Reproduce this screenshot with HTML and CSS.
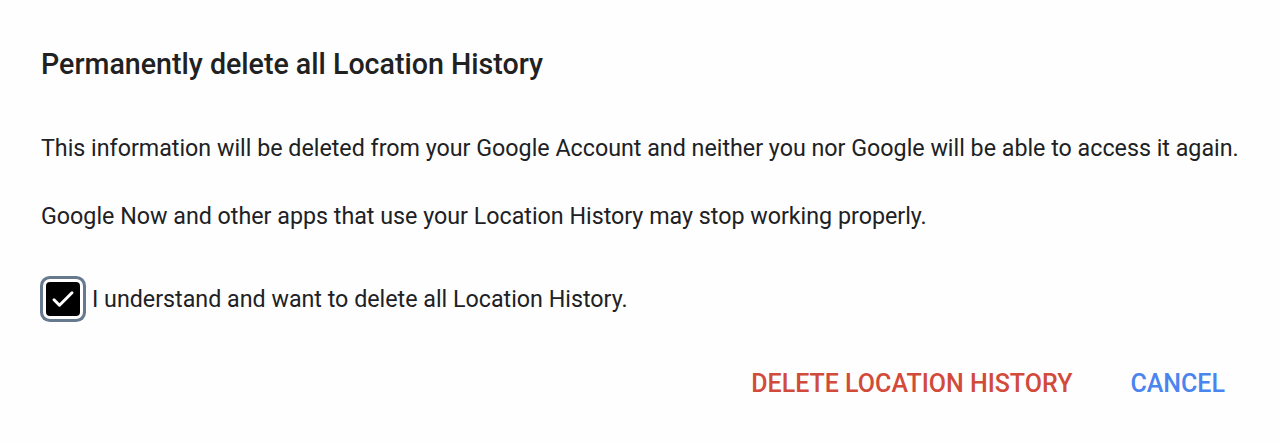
FILE: index.html
```html
<!DOCTYPE html>
<html lang="en">
<head>
    <meta charset="UTF-8">
    <meta name="viewport" content="width=device-width, initial-scale=1.0">
    <title>Permanently delete all Location History</title>
    <link rel="stylesheet" href="styles.css">
</head>
<body>

    <div class="dialog">
        <h1 class="title">Permanently delete all Location History</h1>
        <p class="text">This information will be deleted from your Google Account and neither you nor Google will be able to access it again.</p>
        <p class="text text-second">Google Now and other apps that use your Location History may stop working properly.</p>

        <label class="confirm">
            <span class="box">
                <svg width="30" height="30" viewBox="0 0 24 24">
                    <path d="M4.8 12.6l4.4 4.4L19.2 7" fill="none" stroke="#fff" stroke-width="2.4" stroke-linecap="round" stroke-linejoin="round"/>
                </svg>
            </span>
            I understand and want to delete all Location History.
        </label>

        <div class="actions">
            <button type="button" class="btn btn-delete">Delete Location History</button>
            <button type="button" class="btn btn-cancel">Cancel</button>
        </div>
    </div>

</body>
</html>
```

FILE: styles.css
```css
body {
    margin: 0;
    background: #fefefe;
    font-family: Roboto, "Liberation Sans", sans-serif;
    color: #202124;
}
.dialog {
    padding: 46px 40px 0 41px;
}
.title {
    margin: 0;
    font-size: 28.6px;
    font-weight: 500;
    line-height: 36px;
    color: #212121;
}
.text {
    margin: 50px 0 0;
    font-size: 23.25px;
    line-height: 32px;
}
.text-second {
    margin-top: 36px;
}
.confirm {
    display: flex;
    align-items: center;
    gap: 12px;
    margin-top: 50px;
    font-size: 23.25px;
    line-height: 32px;
}
.box {
    display: flex;
    align-items: center;
    justify-content: center;
    width: 34px;
    height: 34px;
    margin-left: 5px;
    background: #000;
    border-radius: 4px;
    box-shadow: 0 0 0 3px #fff, 0 0 0 6px #66798f;
}
.actions {
    display: flex;
    justify-content: flex-end;
    gap: 58px;
    margin-top: 53px;
    padding-right: 15px;
}
.btn {
    padding: 0;
    border: none;
    background: none;
    font-family: inherit;
    font-size: 25px;
    font-weight: 500;
    line-height: 30px;
    text-transform: uppercase;
    cursor: pointer;
}
.btn-delete {
    color: #d14a3a;
}
.btn-cancel {
    color: #4a84ee;
}
```
